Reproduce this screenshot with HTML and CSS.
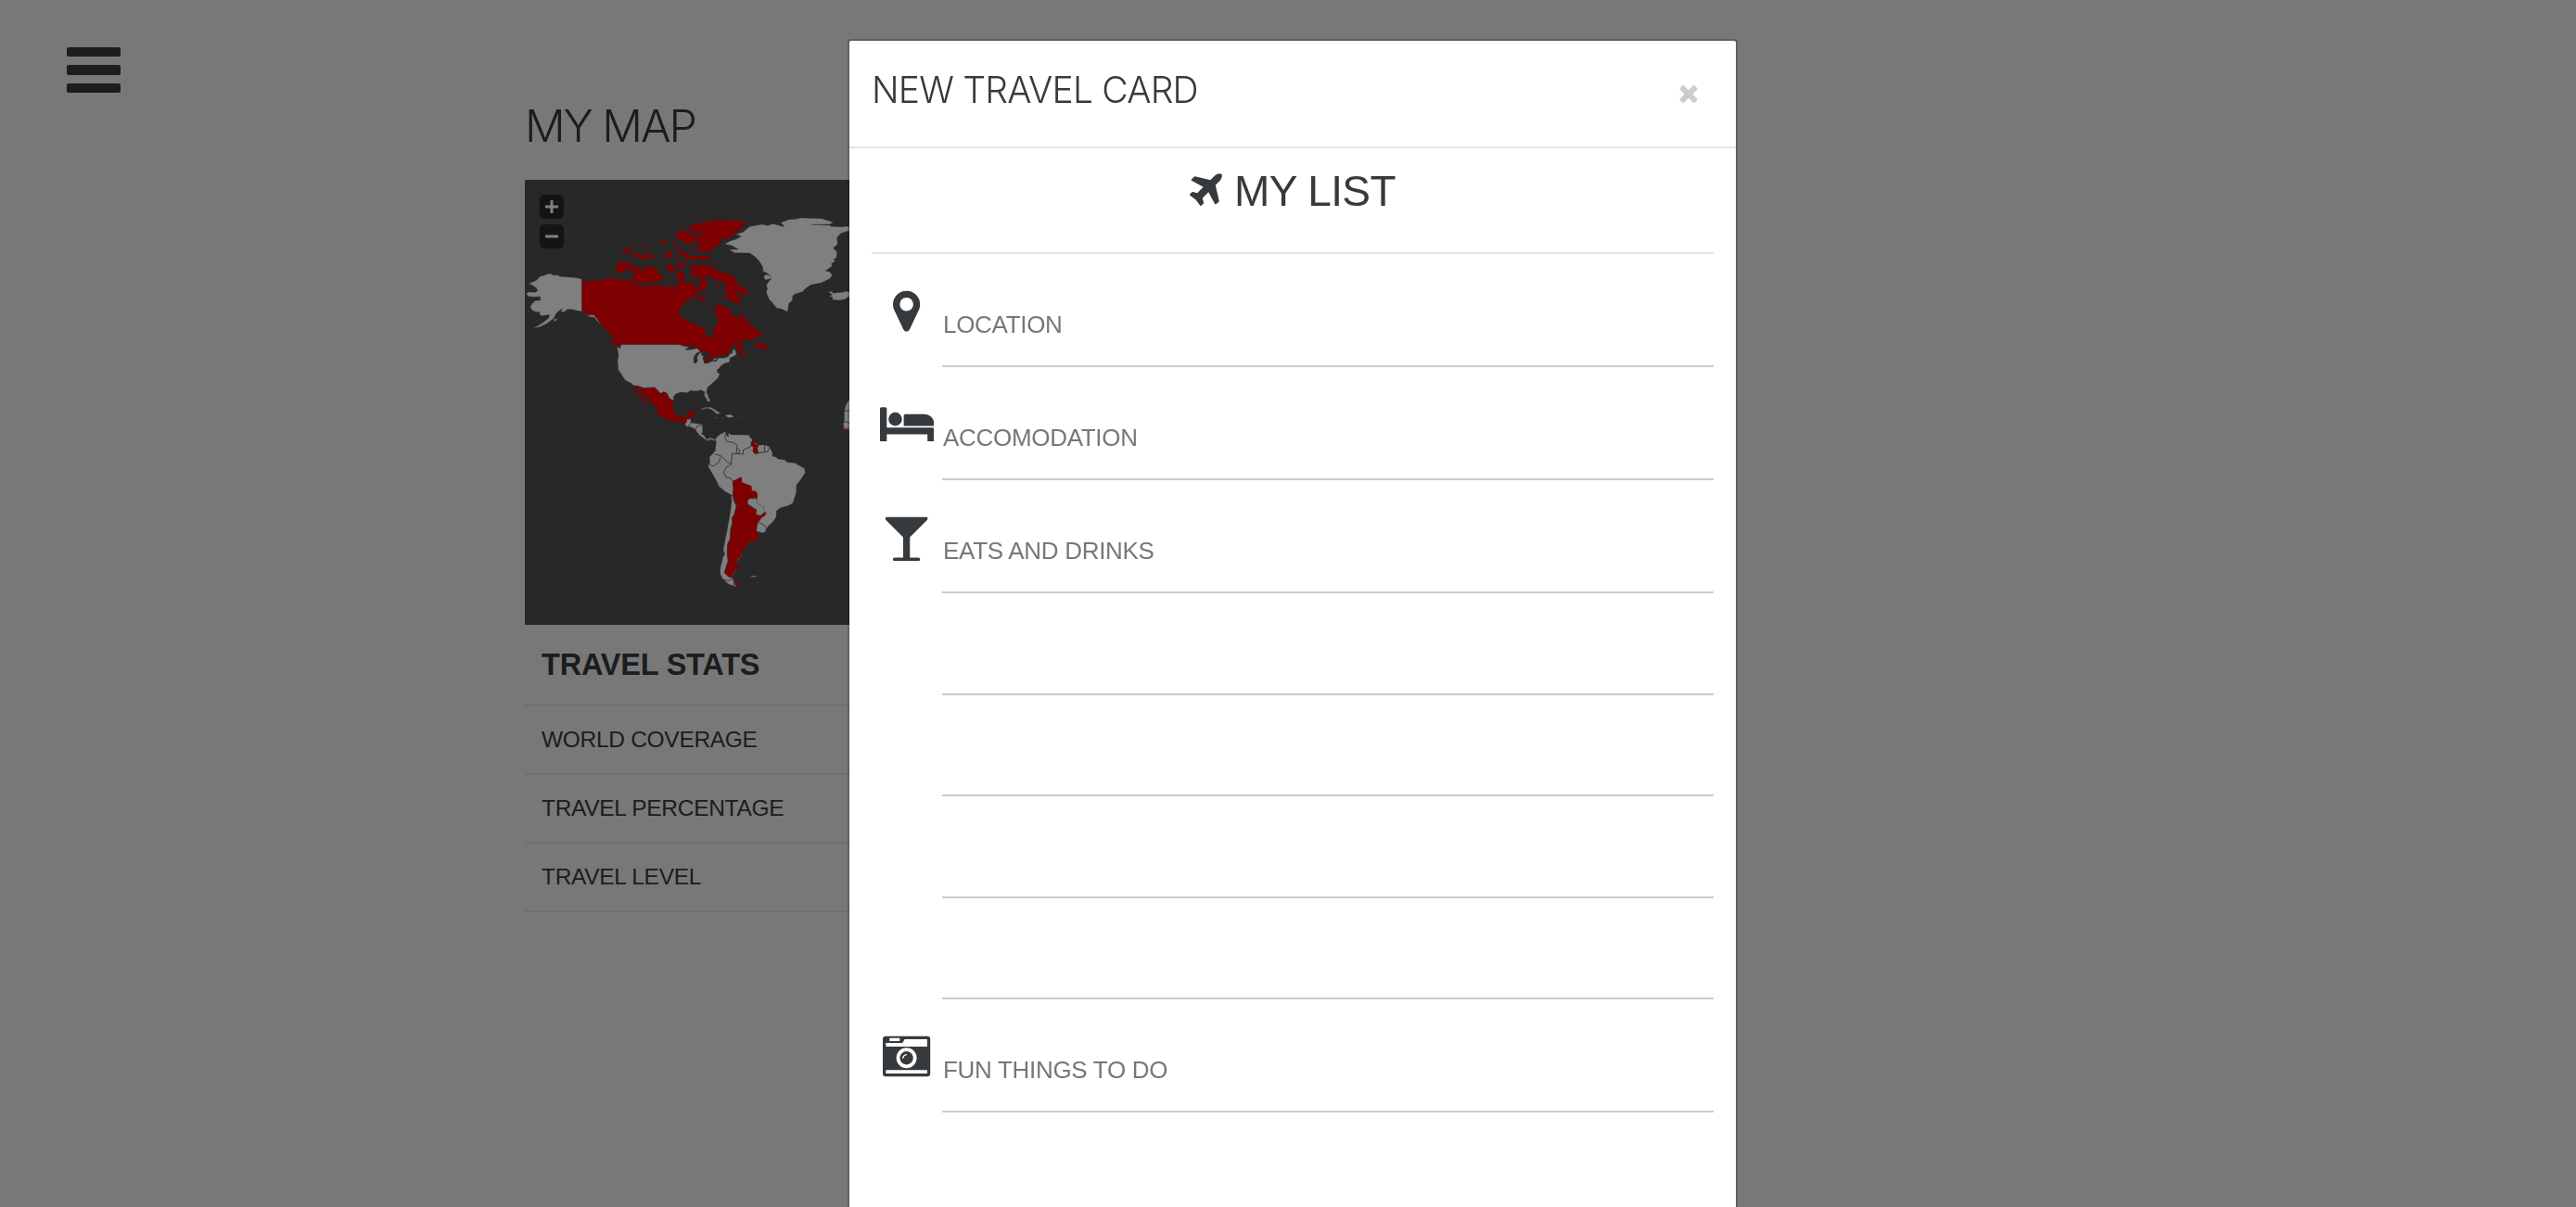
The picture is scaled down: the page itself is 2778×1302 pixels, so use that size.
FILE: index.html
```html
<!DOCTYPE html>
<html lang="en">
<head>
<meta charset="utf-8">
<title>My Map</title>
<link rel="stylesheet" href="styles.css">
</head>
<body>
<div class="page">
  <button class="menu" aria-label="Menu"><span></span><span></span><span></span></button>
  <main class="content">
    <h1 class="page-title">MY MAP</h1>
    <div class="map">
      <svg class="world" viewBox="0 0 370 480" width="370" height="480">
        <g transform="translate(-6 -4) scale(.33333)">
          <path class="land" d="M203 333L178 328 150 326 131 325 128 321 110 320 98 315 82 320 67 325 56 337 42 343 30 347 45 355 55 362 60 370 52 376 30 375 22 381 32 390 48 391 68 390 68 402 52 403 42 412 35 424 42 434 54 440 66 439 65 448 74 452 86 450 98 449 95 459 80 471 62 483 44 493 66 488 84 480 97 472 112 460 118 447 126 438 140 428 134 441 147 438 156 431 170 431 190 436 203 438 220 449 228 455 242 457 254 470 265 484 276 489 277 483 265 474 258 462 244 446 232 450 222 446 203 437Z"/>
          <path class="land" d="M112 463L123 461 119 468 112 470ZM26 438L33 437 32 441Z"/>
          <path class="visited" d="M203 333L218 341 238 337 250 334 262 340 274 333 285 330 292 326 298 334 310 330 322 335 328 331 337 338 350 334 362 338 362 345 378 342 385 346 380 353 396 357 410 352 420 357 432 350 445 349 458 359 470 355 487 358 505 356 508 351 518 360 514 348 512 342 520 334 509 330 508 318 514 309 524 309 536 322 532 338 545 349 561 340 564 354 578 362 575 381 564 389 557 398 543 402 530 415 521 429 518 452 524 460 536 457 538 468 562 474 576 484 592 489 603 489 600 502 607 514 620 525 628 516 628 505 622 494 636 486 643 470 641 452 630 442 636 429 635 416 653 418 665 420 676 431 688 434 687 445 699 455 712 457 719 442 728 455 740 469 745 482 759 487 772 498 783 505 783 518 766 523 748 530 722 530 706 534 695 546 684 557 677 574 660 580 640 584 625 588 614 599 600 603 598 597 607 591 611 577 598 568 586 567 573 559 560 547 545 552 530 548 520 542 516 545 330 545 318 540 303 524 294 514 288 503 276 492 265 484 254 465 242 451 232 447 222 450 203 438Z"/>
          <path class="visited" d="M293 527L308 533 326 546 328 553 315 549 300 539ZM257 499L264 501 262 507ZM720 530L706 536 700 546 704 557 706 574 712 578 722 572 718 566 724 559 718 548 721 542ZM711 587L726 578 753 570 740 577 719 590ZM778 525L771 538 760 554 775 557 789 555 797 564 803 562 800 545 791 545 793 540 782 541 775 536Z"/>
          <path class="visited" d="M320 275L345 278 370 279 366 289 350 297 341 309 330 314 318 310 309 306 314 293ZM330 248L343 235 366 231 371 237 357 243 349 250 334 251ZM365 254L380 248 386 254 405 256 417 252 414 242 426 249 429 257 441 256 440 264 424 265 395 272 391 267 398 262 370 263ZM392 225L410 221 411 227 395 229ZM399 214L410 211 408 216ZM446 205L463 207 480 214 477 221 462 217ZM493 211L508 217 504 223 495 219ZM466 249L480 243 494 249 495 263 478 265 466 262 475 254ZM510 222L518 221 521 231 514 233ZM506 260L522 262 520 269 508 268Z"/>
          <path class="visited" d="M354 305L371 291 386 294 394 307 402 297 400 291 417 294 430 292 432 302 442 291 448 300 449 313 462 323 474 330 466 337 450 337 443 343 425 339 405 348 388 346 366 342 365 333 380 329 364 321 370 315 381 313 359 312ZM473 284L496 284 502 292 502 306 490 311 477 303 484 296 472 290ZM514 281L543 280 538 290 526 295 522 304 511 304 513 293ZM505 237L527 241 530 249 543 246 548 257 566 260 582 259 617 257 617 269 590 272 558 270 540 269 529 257 506 246ZM488 338L498 339 504 347 490 345ZM446 343L458 344 455 349Z"/>
          <path class="visited" d="M507 188L520 175 532 174 545 181 566 190 572 203 565 214 547 220 533 218 525 206 512 204ZM540 164L558 157 580 154 605 147 650 142 700 143 730 149 744 152 721 163 714 168 718 174 699 181 693 193 680 201 650 205 646 211 658 213 646 226 632 228 622 239 632 242 618 246 590 244 555 244 557 238 580 238 585 229 570 222 575 212 576 200 574 189 605 187 600 183 565 184 553 175 563 171Z"/>
          <path class="visited" d="M550 292L562 286 577 289 581 297 590 286 610 288 611 297 625 296 638 306 651 307 664 314 676 315 694 322 704 335 690 339 712 346 707 355 724 357 740 370 733 382 722 386 712 376 699 373 709 387 720 402 718 412 707 408 700 413 678 399 659 395 672 377 663 363 671 352 652 340 635 336 617 325 602 329 560 325 551 309 568 305 555 302ZM613 283L640 289 636 294 618 292ZM580 333L604 334 608 344 605 360 594 371 578 371 580 357 585 347ZM638 354L650 353 650 362 641 363ZM575 385L583 383 590 390 606 393 606 402 590 401 576 409ZM592 410L601 411 600 418ZM616 414L622 416 620 424Z"/>
          <path class="land" d="M664 220L684 209 700 205 718 195 702 188 724 181 746 163 786 156 805 160 820 154 858 164 846 150 873 140 895 139 910 135 978 137 1016 149 1005 156 945 157 1008 159 1008 163 1040 164 1066 162 1068 176 1040 185 1028 199 1030 220 1016 233 1028 245 1027 262 1017 270 1023 275 1010 283 1012 292 998 301 991 307 1004 309 1013 321 1004 332 978 345 943 352 926 364 916 374 892 382 885 387 883 403 872 412 869 436 865 438 848 430 832 427 820 411 808 398 799 376 803 363 799 353 808 340 817 331 810 333 796 336 790 324 800 318 815 325 798 311 789 310 787 292 776 275 762 260 745 249 697 248 679 237 708 237 688 225Z"/>
          <path class="land" d="M1000 375L1012 373 1015 379 1025 377 1045 376 1060 372 1070 376 1070 388 1052 399 1032 402 1012 399 1014 391 1003 390 1012 383Z"/>
          <path class="land" d="M330 545L516 545 530 550 549 553 536 562 550 562 562 560 575 557 586 568 573 573 565 585 564 603 570 606 577 598 575 585 583 573 590 571 589 581 596 580 594 590 599 606 611 605 626 598 630 590 646 589 665 588 676 584 681 575 688 574 690 563 697 560 703 577 695 583 682 588 680 602 664 606 650 616 646 626 642 627 643 637 649 640 643 653 626 669 609 684 606 699 616 723 615 731 608 727 599 710 600 698 588 692 570 696 553 694 545 701 522 699 505 706 499 714 499 726 486 720 478 703 467 697 458 704 449 698 438 684 405 686 385 679 368 677 362 670 343 661 333 646 320 626 318 598 321 579 316 552 326 557Z"/>
          <path class="sea" d="M656 616L651 625 652 632 644 637 645 627 641 635 639 627ZM598 568L617 577 621 586 609 586 603 579ZM622 600L646 589 638 599Z"/>
        </g>
        <g transform="translate(74 146) scale(.33333)">
          <path class="visited" d="M128 227L152 236 168 236 197 233 210 245 217 253 229 249 238 256 245 270 259 277 256 299 264 320 276 331 299 328 307 314 328 309 329 318 320 333 304 334 302 346 290 350 272 346 250 343 230 333 208 322 207 306 198 293 183 279 174 266 159 256 151 240 141 234 147 247 157 262 168 282 178 297 170 294 158 282 158 274 145 267 150 260 138 248Z"/>
          <path class="land" d="M302 345L302 337 315 336 315 348 330 350 353 353 353 380 348 383 357 388 367 402 379 396 392 401 394 408 379 401 372 407 361 402 342 388 328 368 317 362 300 360 296 352Z"/>
          <path class="land" d="M347 303L364 298 380 298 395 307 412 318 399 320 382 305 368 301 352 305ZM427 323L442 321 456 328 440 332 429 328ZM391 330L400 331 398 334ZM417 331L423 331 422 334ZM465 330L474 331 468 333ZM389 285L394 289 391 289Z"/>
          <path class="land" d="M830 270L818 287 812 306 811 345 808 352 811 368 830 373Z"/>
          <path class="visited" d="M811 370L830 373 830 390Z"/>
          <path class="border" d="M810 309H830M811 344L822 346 830 352M814 366L830 368M316 348L312 354 306 359M353 356L336 358 331 368"/>
        </g>
        <g transform="translate(174 236) scale(.33333)">
          <path class="land" d="M94 130L110 115 124 109 129 106 130 118 136 124 137 110 146 117 180 117 201 118 211 130 232 150 255 150 269 155 279 175 279 187 292 189 296 195 318 198 328 206 352 208 365 216 383 226 385 240 375 256 357 280 356 305 345 338 332 346 306 353 292 363 291 384 280 399 264 415 257 432 245 434 227 429 233 451 218 462 196 467 196 480 181 484 182 490 178 512 164 524 162 533 171 539 160 555 150 574 154 588 163 605 158 608 137 600 118 584 110 567 110 548 119 513 120 490 125 462 133 423 143 365 147 330 145 311 124 299 106 284 98 266 70 218 77 209 75 189 84 180 94 168 97 140Z"/>
          <path class="visited" d="M209 143L216 132 224 142 222 147 234 150 229 161 234 177 222 179 216 171 217 157 210 152Z"/>
          <path class="visited" d="M151 266L158 264 176 254 180 258 180 271 196 277 211 283 212 298 226 300 231 312 229 323 220 320 205 323 199 341 174 342 163 347 157 336 151 315 153 289Z"/>
          <path class="visited" d="M163 347L174 342 199 341 214 352 228 361 227 374 240 378 250 368 258 368 257 376 243 387 231 402 227 427 236 448 231 460 199 466 194 483 182 483 193 490 181 492 177 512 164 522 162 532 174 540 160 553 150 570 152 580 137 576 124 563 129 546 136 526 133 504 134 472 143 453 144 424 150 401 148 387 156 375ZM155 588L167 596 177 605 159 605Z"/>
          <path class="land" d="M205 323L220 320 230 325 229 340 250 350 253 368 240 378 226 374 228 361 210 350 199 343 199 330Z"/>
          <path class="land" d="M206 577L217 573 228 573 226 577 210 578ZM66 0L76 0 77 11 68 8ZM202 115L208 117 205 120Z"/>
          <path class="border" d="M129 110L125 125 132 139 152 142 165 151 162 178 148 178 146 212 132 204 120 192 110 184 92 180M162 178L186 180 183 168 193 162 203 158 211 152M166 160L174 168 168 179M234 150L229 161 234 177 244 174M255 150L253 162 256 172M244 174L263 172 269 160M76 215L88 218 107 205 110 190M146 212L130 222 121 239 129 255 143 257 148 264 151 266M151 266L153 289 151 315 145 311M151 315L157 336 163 347 156 375 148 387 150 401 144 424 143 453 134 472 133 504 136 526 129 546 124 563 137 576 152 580 155 605M232 400L249 407 259 418 257 432M205 323L229 323M199 341L228 361M118 584L136 590 148 582"/>
          <path class="sea" d="M116 499L124 493 124 510 119 510Z"/>
        </g>
      </svg>
      <div class="zoomers">
        <button aria-label="Zoom in"><svg viewBox="0 0 14 14"><path d="M0 7H14M7 0V14"/></svg></button>
        <button aria-label="Zoom out"><svg viewBox="0 0 14 14"><path d="M0 7H14"/></svg></button>
      </div>
    </div>
    <table class="stats">
      <thead><tr><th>TRAVEL STATS</th></tr></thead>
      <tbody>
        <tr><td>WORLD COVERAGE</td></tr>
        <tr><td>TRAVEL PERCENTAGE</td></tr>
        <tr><td>TRAVEL LEVEL</td></tr>
      </tbody>
    </table>
  </main>
</div>
<div class="backdrop">
  <section class="modal">
    <header class="modal-header">
      <h4 class="modal-title">NEW TRAVEL CARD</h4>
      <button class="close" aria-label="Close"><svg viewBox="302 302 1188 1252"><path d="M1490 1322q0 40-28 68l-136 136q-28 28-68 28t-68-28l-294-294-294 294q-28 28-68 28t-68-28l-136-136q-28-28-28-68t28-68l294-294-294-294q-28-28-28-68t28-68l136-136q28-28 68-28t68 28l294 294 294-294q28-28 68-28t68 28l136 136q28 28 28 68t-28 68l-294 294 294 294q28 28 28 68z"/></svg></button>
    </header>
    <div class="modal-body">
      <h2 class="list-title">
        <svg class="plane" viewBox="192 128 1408 1408"><path d="M1568 160q44 52 12 148t-108 172l-161 161 160 696q5 19-12 33l-128 96q-7 6-19 6-4 0-7-1-15-3-21-16l-279-508-259 259 53 194q5 17-8 31l-96 96q-9 9-23 9h-2q-15-2-24-13l-189-252-252-189q-11-7-13-23-1-13 9-25l96-97q9-9 23-9 6 0 8 1l194 53 259-259-508-279q-14-8-17-24-2-16 9-27l128-128q14-13 30-8l665 159 160-160q76-76 172-108t148 12z"/></svg>
        <span>MY LIST</span>
      </h2>
      <div class="row">
        <svg class="icon" viewBox="0 0 1792 1792"><path d="M1152 640q0-106-75-181t-181-75-181 75-75 181 75 181 181 75 181-75 75-181zm256 0q0 109-33 179l-364 774q-16 33-47.500 52t-67.500 19-67.500-19-46.500-52l-365-774q-33-70-33-179 0-212 150-362t362-150 362 150 150 362z"/></svg>
        <input type="text" placeholder="LOCATION">
      </div>
      <div class="row">
        <svg class="icon bed" viewBox="0 0 2048 1792"><path d="M256 1024h1728q26 0 45 19t19 45v448h-256v-256h-1536v256h-256v-1216q0-26 19-45t45-19h128q26 0 45 19t19 45v704zm576-320q0-106-75-181t-181-75-181 75-75 181 75 181 181 75 181-75 75-181zm1216 256v-64q0-159-112.500-271.500t-271.500-112.500h-704q-26 0-45 19t-19 45v384h1152z"/></svg>
        <input type="text" placeholder="ACCOMODATION">
      </div>
      <div class="row">
        <svg class="icon" viewBox="0 0 1792 1792"><path d="M1699 186q0 35-43 78l-632 632v768h320q26 0 45 19t19 45-19 45-45 19h-896q-26 0-45-19t-19-45 19-45 45-19h320v-768l-632-632q-43-43-43-78 0-23 18-36.500t38-17.500 43-4h1408q23 0 43 4t38 17.500 18 36.500z"/></svg>
        <input type="text" placeholder="EATS AND DRINKS">
      </div>
      <div class="row blank"><input type="text"></div>
      <div class="row blank"><input type="text"></div>
      <div class="row blank"><input type="text"></div>
      <div class="row blank"><input type="text"></div>
      <div class="row">
        <svg class="icon" viewBox="158 102 154 154">
          <rect x="158" y="113" width="154" height="131" rx="10"/>
          <g class="cut"><path d="M168 135H222L229 123H302V147H168ZM180 119H213V129H180ZM168 223H302V234H168Z"/><circle cx="235" cy="184" r="33"/></g>
          <circle cx="235" cy="184" r="21.500"/>
          <path class="glint" d="M223 186Q224 174 236 173"/>
        </svg>
        <input type="text" placeholder="FUN THINGS TO DO">
      </div>
      <div class="row blank"><input type="text"></div>
    </div>
  </section>
</div>
</body>
</html>
```
FILE: styles.css
```css
* { box-sizing: border-box; }

body {
  margin: 0;
  height: 1302px;
  overflow: hidden;
  background: #f1f1f1;
  color: #373a3c;
  font-family: "Liberation Sans", Arial, sans-serif;
}

button { padding: 0; border: 0; background: none; }

.page { display: flex; height: 1302px; }

.menu {
  display: flex;
  flex-direction: column;
  gap: 9px;
  width: 58px;
  margin: 51px 0 0 72px;
  align-self: flex-start;
}
.menu span { height: 10.300px; border-radius: 2px; background: #373a3c; }

.content { width: 1110px; margin-left: 436px; padding-top: 103px; }

.page-title {
  margin: 0;
  height: 91px;
  font: 300 48.500px/66px Inter, sans-serif;
  letter-spacing: -2.100px;
}

.map { position: relative; height: 480px; background: #505050; overflow: hidden; }
.world { display: block; }
.land { fill: #fff; stroke: #505050; stroke-width: 1; }
.visited { fill: #f00; stroke: #505050; stroke-width: 1; }
.border { fill: none; stroke: #505050; stroke-width: 2.500; }
.sea { fill: #505050; }

.zoomers {
  position: absolute;
  left: 16px;
  top: 16px;
  display: flex;
  flex-direction: column;
  gap: 6px;
}
.zoomers button {
  display: flex;
  align-items: center;
  justify-content: center;
  width: 26px;
  height: 26px;
  border-radius: 5px;
  background: #292929;
}
.zoomers svg { width: 14px; height: 14px; }
.zoomers path { stroke: #fff; stroke-width: 3; }

.stats { width: 100%; border-collapse: collapse; text-align: left; }
.stats th {
  height: 87px;
  padding: 0 18px;
  border-bottom: 2px solid #dedfe0;
  font-size: 32.500px;
  letter-spacing: -.2px;
}
.stats td {
  height: 74px;
  padding: 0 18px;
  border-bottom: 2px solid #dedfe0;
  font-size: 24.500px;
  letter-spacing: -.3px;
}

.backdrop {
  position: fixed;
  inset: 0;
  padding-top: 42px;
  background: rgba(0, 0, 0, .5);
  overflow: hidden;
}

.modal {
  width: 960px;
  min-height: 1400px;
  margin-left: 914px;
  margin-right: auto;
  border: 2px solid rgba(0, 0, 0, .2);
  border-radius: 4px;
  background: #fff;
  background-clip: padding-box;
}

.modal-header {
  display: flex;
  justify-content: space-between;
  height: 116px;
  padding: 28px 41px 0 24px;
  border-bottom: 2px solid #e5e5e5;
}
.modal-title {
  margin: 0;
  font: 300 39px/49px Inter, sans-serif;
  letter-spacing: -.8px;
}
.close { height: 20px; margin-top: 19px; }
.close svg { display: block; width: 20px; height: 20px; fill: #ccc; }

.modal-body { padding: 0 24px; }

.list-title {
  display: flex;
  justify-content: center;
  gap: 13px;
  height: 114px;
  margin: 0;
  padding-top: 20px;
  border-bottom: 2px solid #e5e5e5;
  font-size: 46px;
  font-weight: 400;
  line-height: 52px;
  letter-spacing: -.6px;
}
.plane { width: 35px; height: 35px; margin-top: 7px; fill: #373a3c; }

.row {
  display: grid;
  grid-template-columns: 76px 1fr;
  align-items: end;
  height: 122px;
}
.blank { height: 109.500px; }
.icon {
  width: 51.200px;
  height: 51.200px;
  margin-bottom: 35px;
  justify-self: center;
  fill: #373a3c;
}
.bed { width: 58.500px; }
.cut { fill: #fff; }
.glint { fill: none; stroke: #fff; stroke-width: 4; }

input {
  grid-column: 2;
  width: 100%;
  height: 90px;
  padding: 1px 0 0 1px;
  border: 0;
  border-bottom: 2px solid #ccc;
  background: none;
  font: 26px "Liberation Sans", Arial, sans-serif;
  letter-spacing: -.3px;
  color: #373a3c;
}
input::placeholder { color: #777; opacity: 1; }
```
